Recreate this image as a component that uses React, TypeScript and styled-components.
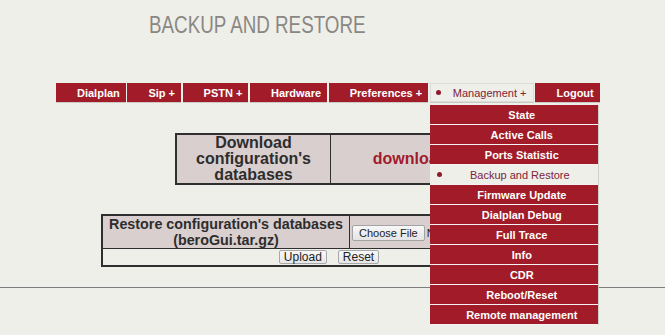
import React from 'react';
import styled, { createGlobalStyle } from 'styled-components';

const GlobalStyle = createGlobalStyle`
  body {
    margin: 0;
    background: #efefea;
    font-family: "Liberation Sans", Arial, sans-serif;
  }
`;

const mainMenu = [
  { label: 'Dialplan' },
  { label: 'Sip +' },
  { label: 'PSTN +' },
  { label: 'Hardware' },
  { label: 'Preferences +' },
  { label: 'Management +', active: true },
  { label: 'Logout' },
];

const managementMenu = [
  'State',
  'Active Calls',
  'Ports Statistic',
  'Backup and Restore',
  'Firmware Update',
  'Dialplan Debug',
  'Full Trace',
  'Info',
  'CDR',
  'Reboot/Reset',
  'Remote management',
];

const Page = styled.div`
  width: 665px;
  min-height: 335px;
`;

const Title = styled.h1`
  margin: 0;
  padding: 11px 150px 0 0;
  height: 28px;
  line-height: 28px;
  text-align: center;
  font-size: 24px;
  font-weight: normal;
  color: #8a8783;
`;

// the original heading uses a narrow sans; squeeze Liberation Sans to match
const TitleText = styled.span`
  display: inline-block;
  transform: scaleX(0.783);
  transform-origin: center;
`;

const Nav = styled.ul`
  position: relative;
  z-index: 10;
  display: flex;
  margin: 44px 0 0;
  padding: 0 0 0 56px;
  list-style: none;
`;

const NavItem = styled.li<{ $active?: boolean }>`
  position: relative;
  display: flex;
  align-items: center;
  height: 19px;
  margin-right: ${(p) => (p.$active ? 1 : 1.6)}px;
  padding: ${(p) => (p.$active ? '0 8px 0 6px' : '0 6px 0 21px')};
  border-bottom: 1px solid #c9c9c6;
  background: ${(p) => (p.$active ? '#efefea' : '#a11c28')};
  box-shadow: ${(p) => (p.$active ? 'inset 0 0 0 1px #dcdcd8' : 'none')};
  color: ${(p) => (p.$active ? '#7c2338' : '#fff')};
  font-size: 11px;
  font-weight: ${(p) => (p.$active ? 'normal' : 'bold')};
  white-space: nowrap;
`;

const Bullet = styled.span<{ $gap: number }>`
  width: 5px;
  height: 5px;
  margin-right: ${(p) => p.$gap}px;
  border-radius: 50%;
  background: #8e1a2b;
  flex-shrink: 0;
`;

const Dropdown = styled.ul`
  position: absolute;
  top: 22px;
  left: 0;
  width: 168px;
  margin: 0;
  padding: 0;
  list-style: none;
  border-right: 1px solid #cfcfcb;
`;

const DropItem = styled.li<{ $active?: boolean }>`
  display: flex;
  align-items: center;
  height: 19px;
  padding: 0 0 0 ${(p) => (p.$active ? 7 : 16)}px;
  border-bottom: 1px solid #f4f2f2;
  background: ${(p) => (p.$active ? '#efefea' : '#a11c28')};
  color: ${(p) => (p.$active ? '#7c2338' : '#fff')};
  font-size: 11px;
  font-weight: ${(p) => (p.$active ? 'normal' : 'bold')};
  white-space: nowrap;
`;

const DropLabel = styled.span`
  flex: 1;
  text-align: center;
`;

const DataTable = styled.table<{ $left: number; $width: number; $top: number }>`
  table-layout: fixed;
  width: ${(p) => p.$width}px;
  margin: ${(p) => p.$top}px 0 0 ${(p) => p.$left}px;
  border-collapse: collapse;
  border: 2px solid #2f2f2f;
  color: #2d2d2d;
`;

const LabelCell = styled.td<{ $width: number; $size: number }>`
  width: ${(p) => p.$width}px;
  padding: 0 2px;
  border: 1px solid #2f2f2f;
  background: #dacfcf;
  font-size: ${(p) => p.$size}px;
  line-height: 16px;
  font-weight: bold;
  text-align: center;
`;

const ValueCell = styled.td<{ $align?: string }>`
  padding: 0 2px;
  border: 1px solid #2f2f2f;
  background: #dacfcf;
  text-align: ${(p) => p.$align || 'center'};
  vertical-align: middle;
  white-space: nowrap;
  overflow: hidden;
`;

const ActionCell = styled.td`
  height: 16px;
  padding: 0;
  border: 1px solid #2f2f2f;
`;

const Actions = styled.div`
  display: flex;
  justify-content: center;
  gap: 11px;
`;

const DownloadLink = styled.a`
  color: #a21b2c;
  font-size: 16px;
  font-weight: bold;
  text-decoration: none;
`;

const FileInput = styled.input`
  font-family: "Liberation Sans", Arial, sans-serif;
  font-size: 11px;
  color: #222;

  &::file-selector-button {
    height: 16px;
    margin-right: 2px;
    padding: 0 6px;
    border: 1px solid #a3a3a3;
    border-radius: 2px;
    background: linear-gradient(#f8f8f8, #e4e4e4);
    font-family: "Liberation Sans", Arial, sans-serif;
    font-size: 11px;
    color: #222;
  }
`;

const SmallButton = styled.button`
  height: 14px;
  padding: 0 4px;
  border: 1px solid #a8a8a8;
  border-radius: 2px;
  background: linear-gradient(#f8f8f8, #e6e6e6);
  font-family: "Liberation Sans", Arial, sans-serif;
  font-size: 12px;
  line-height: 12px;
  color: #222;
`;

const Rule = styled.hr`
  margin: 20px 0 0;
  border: 0;
  border-top: 1px solid #7d7d7d;
`;

export default function App() {
  return (
    <Page>
      <GlobalStyle />
      <Title>
        <TitleText>BACKUP AND RESTORE</TitleText>
      </Title>

      <Nav>
        {mainMenu.map((item) => (
          <NavItem key={item.label} $active={item.active}>
            {item.active && <Bullet $gap={12} />}
            {item.label}
            {item.active && (
              <Dropdown>
                {managementMenu.map((entry) => {
                  const current = entry === 'Backup and Restore';
                  return (
                    <DropItem key={entry} $active={current}>
                      {current && <Bullet $gap={0} />}
                      <DropLabel>{entry}</DropLabel>
                    </DropItem>
                  );
                })}
              </Dropdown>
            )}
          </NavItem>
        ))}
      </Nav>

      <DataTable $left={175} $width={316} $top={30}>
        <tbody>
          <tr>
            <LabelCell $width={149} $size={16}>
              Download configuration's databases
            </LabelCell>
            <ValueCell>
              <DownloadLink href="#">download</DownloadLink>
            </ValueCell>
          </tr>
        </tbody>
      </DataTable>

      <DataTable $left={101} $width={456} $top={29}>
        <tbody>
          <tr>
            <LabelCell $width={242} $size={14.3}>
              Restore configuration's databases
              <br />
              (beroGui.tar.gz)
            </LabelCell>
            <ValueCell $align="left">
              <FileInput type="file" />
            </ValueCell>
          </tr>
          <tr>
            <ActionCell colSpan={2}>
              <Actions>
                <SmallButton type="button">Upload</SmallButton>
                <SmallButton type="button">Reset</SmallButton>
              </Actions>
            </ActionCell>
          </tr>
        </tbody>
      </DataTable>

      <Rule />
    </Page>
  );
}
